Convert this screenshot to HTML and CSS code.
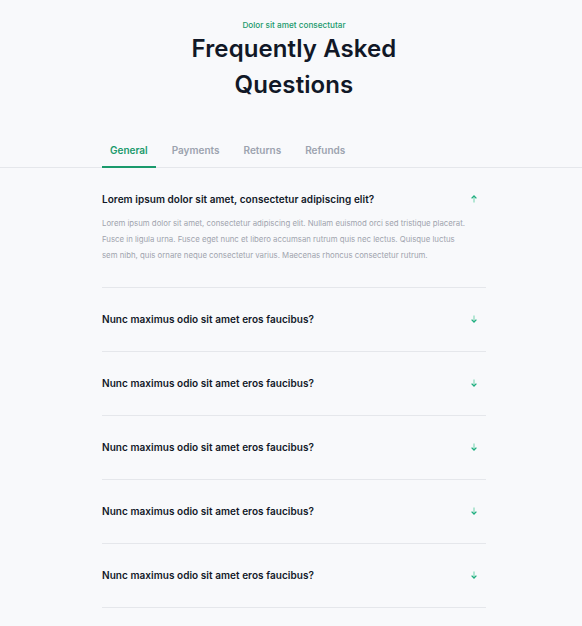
FILE: index.html
```html
<!DOCTYPE html>
<html lang="en">
<head>
<meta charset="utf-8">
<title>FAQ</title>
<link rel="stylesheet" href="styles.css">
</head>
<body>
<header class="hero">
  <p class="eyebrow">Dolor sit amet consectutar</p>
  <h1 class="title">Frequently Asked<br>Questions</h1>
</header>
<nav class="tabs-bar">
  <div class="tabs">
    <button class="tab tab-active">General</button>
    <button class="tab">Payments</button>
    <button class="tab">Returns</button>
    <button class="tab">Refunds</button>
  </div>
</nav>
<main class="faq">
  <div class="item item-open">
    <div class="question">
      <span>Lorem ipsum dolor sit amet, consectetur adipiscing elit?</span>
      <svg class="arrow" width="8" height="8" viewBox="0 0 8 8"><path d="M4 7.5V1" stroke="#8fdcbf" stroke-width="1.3" fill="none"/><path d="M1.6 3.4L4 1 6.4 3.4" stroke="#1fae7f" stroke-width="1.3" fill="none"/></svg>
    </div>
    <p class="answer">Lorem ipsum dolor sit amet, consectetur adipiscing elit. Nullam euismod orci sed tristique placerat. Fusce in ligula urna. Fusce eget nunc et libero accumsan rutrum quis nec lectus. Quisque luctus sem nibh, quis ornare neque consectetur varius. Maecenas rhoncus consectetur rutrum.</p>
  </div>
  <div class="item">
    <div class="question"><span>Nunc maximus odio sit amet eros faucibus?</span>
      <svg class="arrow" width="8" height="8" viewBox="0 0 8 8"><path d="M4 0.5V7" stroke="#8fdcbf" stroke-width="1.3" fill="none"/><path d="M1.6 4.6L4 7 6.4 4.6" stroke="#1fae7f" stroke-width="1.3" fill="none"/></svg>
    </div>
  </div>
  <div class="item">
    <div class="question"><span>Nunc maximus odio sit amet eros faucibus?</span>
      <svg class="arrow" width="8" height="8" viewBox="0 0 8 8"><path d="M4 0.5V7" stroke="#8fdcbf" stroke-width="1.3" fill="none"/><path d="M1.6 4.6L4 7 6.4 4.6" stroke="#1fae7f" stroke-width="1.3" fill="none"/></svg>
    </div>
  </div>
  <div class="item">
    <div class="question"><span>Nunc maximus odio sit amet eros faucibus?</span>
      <svg class="arrow" width="8" height="8" viewBox="0 0 8 8"><path d="M4 0.5V7" stroke="#8fdcbf" stroke-width="1.3" fill="none"/><path d="M1.6 4.6L4 7 6.4 4.6" stroke="#1fae7f" stroke-width="1.3" fill="none"/></svg>
    </div>
  </div>
  <div class="item">
    <div class="question"><span>Nunc maximus odio sit amet eros faucibus?</span>
      <svg class="arrow" width="8" height="8" viewBox="0 0 8 8"><path d="M4 0.5V7" stroke="#8fdcbf" stroke-width="1.3" fill="none"/><path d="M1.6 4.6L4 7 6.4 4.6" stroke="#1fae7f" stroke-width="1.3" fill="none"/></svg>
    </div>
  </div>
  <div class="item">
    <div class="question"><span>Nunc maximus odio sit amet eros faucibus?</span>
      <svg class="arrow" width="8" height="8" viewBox="0 0 8 8"><path d="M4 0.5V7" stroke="#8fdcbf" stroke-width="1.3" fill="none"/><path d="M1.6 4.6L4 7 6.4 4.6" stroke="#1fae7f" stroke-width="1.3" fill="none"/></svg>
    </div>
  </div>
</main>
</body>
</html>
```
FILE: styles.css
```css
* { box-sizing: border-box; }
html, body {
  margin: 0;
  background: #f8f9fb;
  font-family: "Inter", "Liberation Sans", sans-serif;
  color: #111827;
}
.hero {
  padding: 19px 0 0 6px;
  text-align: center;
}
.eyebrow {
  margin: 0;
  font-size: 8.2px;
  line-height: 12px;
  font-weight: 500;
  color: #1a9a6c;
}
.title {
  margin: 0;
  font-size: 24px;
  line-height: 36px;
  font-weight: 600;
  color: #111827;
  letter-spacing: 0.1px;
}
.tabs-bar {
  margin-top: 33px;
  border-bottom: 1px solid #e5e7eb;
}
.tabs {
  width: 384px;
  margin: 0 auto;
  position: relative;
  left: 3px;
  display: flex;
  gap: 8px;
}
.tab {
  border: 0;
  background: none;
  font-family: inherit;
  font-size: 10px;
  font-weight: 600;
  color: #9ca3af;
  padding: 8px 8px 10px;
  line-height: 12px;
  border-bottom: 2px solid transparent;
  margin-bottom: -1px;
  cursor: pointer;
}
.tab-active {
  color: #1a9a6c;
  border-bottom-color: #1a9a6c;
}
.faq {
  width: 384px;
  margin: 0 auto;
  position: relative;
  left: 3px;
}
.item {
  padding: 23px 0 24px;
  border-bottom: 1px solid #e5e7eb;
}
.question {
  display: flex;
  justify-content: space-between;
  align-items: center;
  height: 16px;
  font-size: 10px;
  font-weight: 600;
  color: #111827;
  letter-spacing: 0.05px;
}
.arrow {
  margin-right: 8px;
}
.answer {
  margin: 8px 0 0;
  max-width: 368px;
  font-size: 7.8px;
  line-height: 16px;
  color: #a0a4ae;
}
```
